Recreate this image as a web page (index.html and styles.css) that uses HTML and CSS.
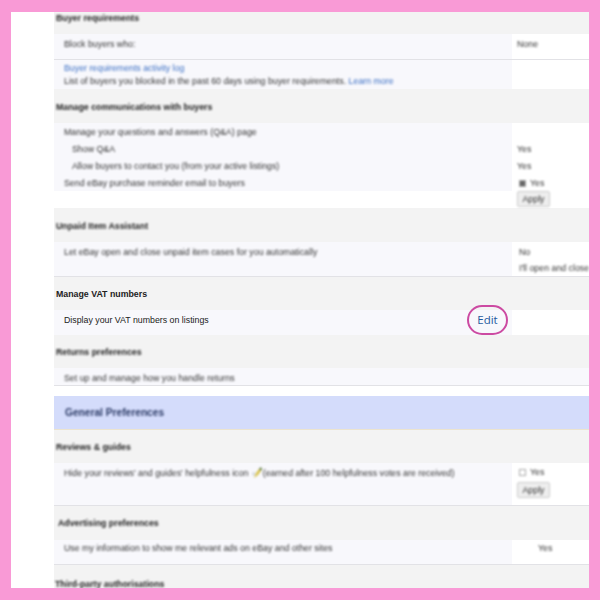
FILE: index.html
```html
<!DOCTYPE html>
<html lang="en">

<head>
    <meta charset="UTF-8">
    <title>Site Preferences</title>
    <link rel="stylesheet" href="styles.css">
</head>

<body>
    <div class="frame">
        <div class="sheet">
            <div class="head h22 soft"><b>Buyer requirements</b></div>
            <div class="row line">
                <div class="left h25 soft"><p>Block buyers who:</p></div>
                <div class="right none soft"><p>None</p></div>
            </div>
            <div class="row">
                <div class="left h29 soft">
                    <p><a href="#">Buyer requirements activity log</a></p>
                    <p>List of buyers you blocked in the past 60 days using buyer requirements. <a href="#" class="more">Learn more</a></p>
                </div>
                <div class="right"></div>
            </div>

            <div class="head h34 soft"><b>Manage communications with buyers</b></div>
            <div class="row">
                <div class="left list soft">
                    <p>Manage your questions and answers (Q&amp;A) page</p>
                    <p class="sub">Show Q&amp;A</p>
                    <p class="sub">Allow buyers to contact you (from your active listings)</p>
                    <p>Send eBay purchase reminder email to buyers</p>
                </div>
                <div class="right list soft">
                    <p></p>
                    <p>Yes</p>
                    <p>Yes</p>
                    <p class="check"><span class="box on"></span>Yes</p>
                </div>
            </div>
            <div class="row apply-row">
                <div class="blank"></div>
                <div class="right soft"><span class="btn">Apply</span></div>
            </div>

            <div class="head h34 soft"><b>Unpaid Item Assistant</b></div>
            <div class="row line">
                <div class="left h34 soft"><p>Let eBay open and close unpaid item cases for you automatically</p></div>
                <div class="right unpaid soft">
                    <p>No</p>
                    <p>I'll open and close</p>
                </div>
            </div>

            <div class="head h33"><b>Manage VAT numbers</b></div>
            <div class="row vat">
                <div class="left h25"><p>Display your VAT numbers on listings</p></div>
                <div class="right"></div>
                <a href="#" class="edit">Edit</a>
            </div>

            <div class="head h33 soft"><b>Returns preferences</b></div>
            <div class="full soft"><p>Set up and manage how you handle returns</p></div>
            <div class="gap"></div>

            <div class="band soft"><b>General Preferences</b></div>

            <div class="head h33 soft"><b>Reviews &amp; guides</b></div>
            <div class="row line">
                <div class="left h42 soft">
                    <p>Hide your reviews' and guides' helpfulness icon
                        <svg class="star" width="12" height="12" viewBox="0 0 12 12">
                            <path d="M3 11 5 6 8 2 10 4 7 8Z" fill="#d8c24a" />
                            <path d="M8 2 10 0 11 2 10 4Z" fill="#5d7a3a" />
                            <path d="M1 6 4 5 4 8 2 9Z" fill="#cfd6e0" />
                        </svg>(earned after 100 helpfulness votes are received)</p>
                </div>
                <div class="right reviews soft">
                    <p class="check"><span class="box"></span>Yes</p>
                    <span class="btn">Apply</span>
                </div>
            </div>

            <div class="head h34 soft"><b class="nudge">Advertising preferences</b></div>
            <div class="row line">
                <div class="left h24 soft"><p>Use my information to show me relevant ads on eBay and other sites</p></div>
                <div class="right centre soft"><p>Yes</p></div>
            </div>

            <div class="head last soft"><b class="back">Third-party authorisations</b></div>
        </div>
    </div>
</body>

</html>
```

FILE: styles.css
```css
* {
    margin: 0;
    padding: 0;
    box-sizing: border-box;
}

body {
    width: 600px;
    height: 600px;
    overflow: hidden;
    background: #f99ad6;
    font: 8.8px/13px "Liberation Sans", Arial, sans-serif;
    color: #333;
}

a {
    color: #3b6fc4;
    text-decoration: none;
}

.frame {
    width: 600px;
    height: 600px;
    padding: 12px 11px;
}

.sheet {
    height: 576px;
    overflow: hidden;
    background: #fff;
    padding-left: 43px;
}

.soft > p,
.soft > b,
.soft > .btn {
    filter: blur(0.9px);
}

.head {
    background: #f3f3f3;
    padding-left: 2px;
    color: #222;
    display: flex;
    align-items: center;
}

.h22 {
    height: 22px;
    padding-bottom: 10px;
}

.h33 {
    height: 33px;
    padding-top: 2px;
}

.h34 {
    height: 34px;
    padding-top: 2px;
}

.last {
    height: 25px;
    padding-top: 14px;
}

.nudge {
    margin-left: 2px;
    margin-top: -2px;
}

.back {
    margin-left: -1px;
}

.row {
    display: grid;
    grid-template-columns: 458px 77px;
    position: relative;
}

.line {
    border-bottom: 1px solid #e2e2e6;
}

.left {
    background: #f8f8fc;
    padding-left: 10px;
}

.left p {
    white-space: nowrap;
}

.right {
    padding-left: 5px;
    background: #fff;
}

.none {
    padding-top: 4px;
}

.h24 {
    height: 24px;
    padding-top: 2px;
}

.h25 {
    height: 25px;
    padding-top: 4px;
}

.h29 {
    height: 29px;
    padding-top: 2px;
}

.h34.left {
    padding-top: 4px;
}

.h42 {
    height: 42px;
    padding-top: 4px;
}

.list {
    height: 68px;
    padding-top: 1px;
}

.list p {
    height: 17px;
    line-height: 17px;
}

.sub {
    padding-left: 8px;
}

.unpaid {
    height: 34px;
    padding-top: 2px;
    padding-left: 7px;
    white-space: nowrap;
    overflow: hidden;
}

.unpaid p {
    line-height: 16px;
}

.apply-row {
    height: 17px;
}

.blank {
    background: #fff;
}

.check {
    display: flex;
    align-items: center;
    gap: 4px;
    padding-left: 2px;
}

.box {
    width: 7px;
    height: 7px;
    border: 1px solid #aaa;
    background: #fff;
}

.box.on {
    background: #666;
}

.btn {
    display: block;
    width: 33px;
    height: 16px;
    border: 1px solid #ccc;
    border-radius: 2px;
    background: #eee;
    text-align: center;
    line-height: 14px;
}

.reviews {
    padding-top: 3px;
}

.reviews .check {
    margin-bottom: 3px;
}

.vat {
    color: #222;
}

.edit {
    position: absolute;
    left: 413px;
    top: -5px;
    width: 41px;
    height: 30px;
    border: 2px solid #cc4aa2;
    border-radius: 15px;
    font: 11.5px/25px "Open Sans", sans-serif;
    color: #1f5a9e;
    text-align: center;
}

.full {
    height: 18px;
    background: #f8f8fc;
    padding: 4px 0 0 10px;
    border-bottom: 1px solid #e2e2e6;
    width: 535px;
}

.gap {
    height: 10px;
}

.band {
    height: 34px;
    background: #d4dcfb;
    border-bottom: 1px solid #ece4cf;
    padding-left: 11px;
    font-size: 10.2px;
    line-height: 33px;
    color: #2c3b66;
}

.star {
    vertical-align: -3px;
}

.centre {
    padding-left: 26px;
    padding-top: 2px;
}
```
